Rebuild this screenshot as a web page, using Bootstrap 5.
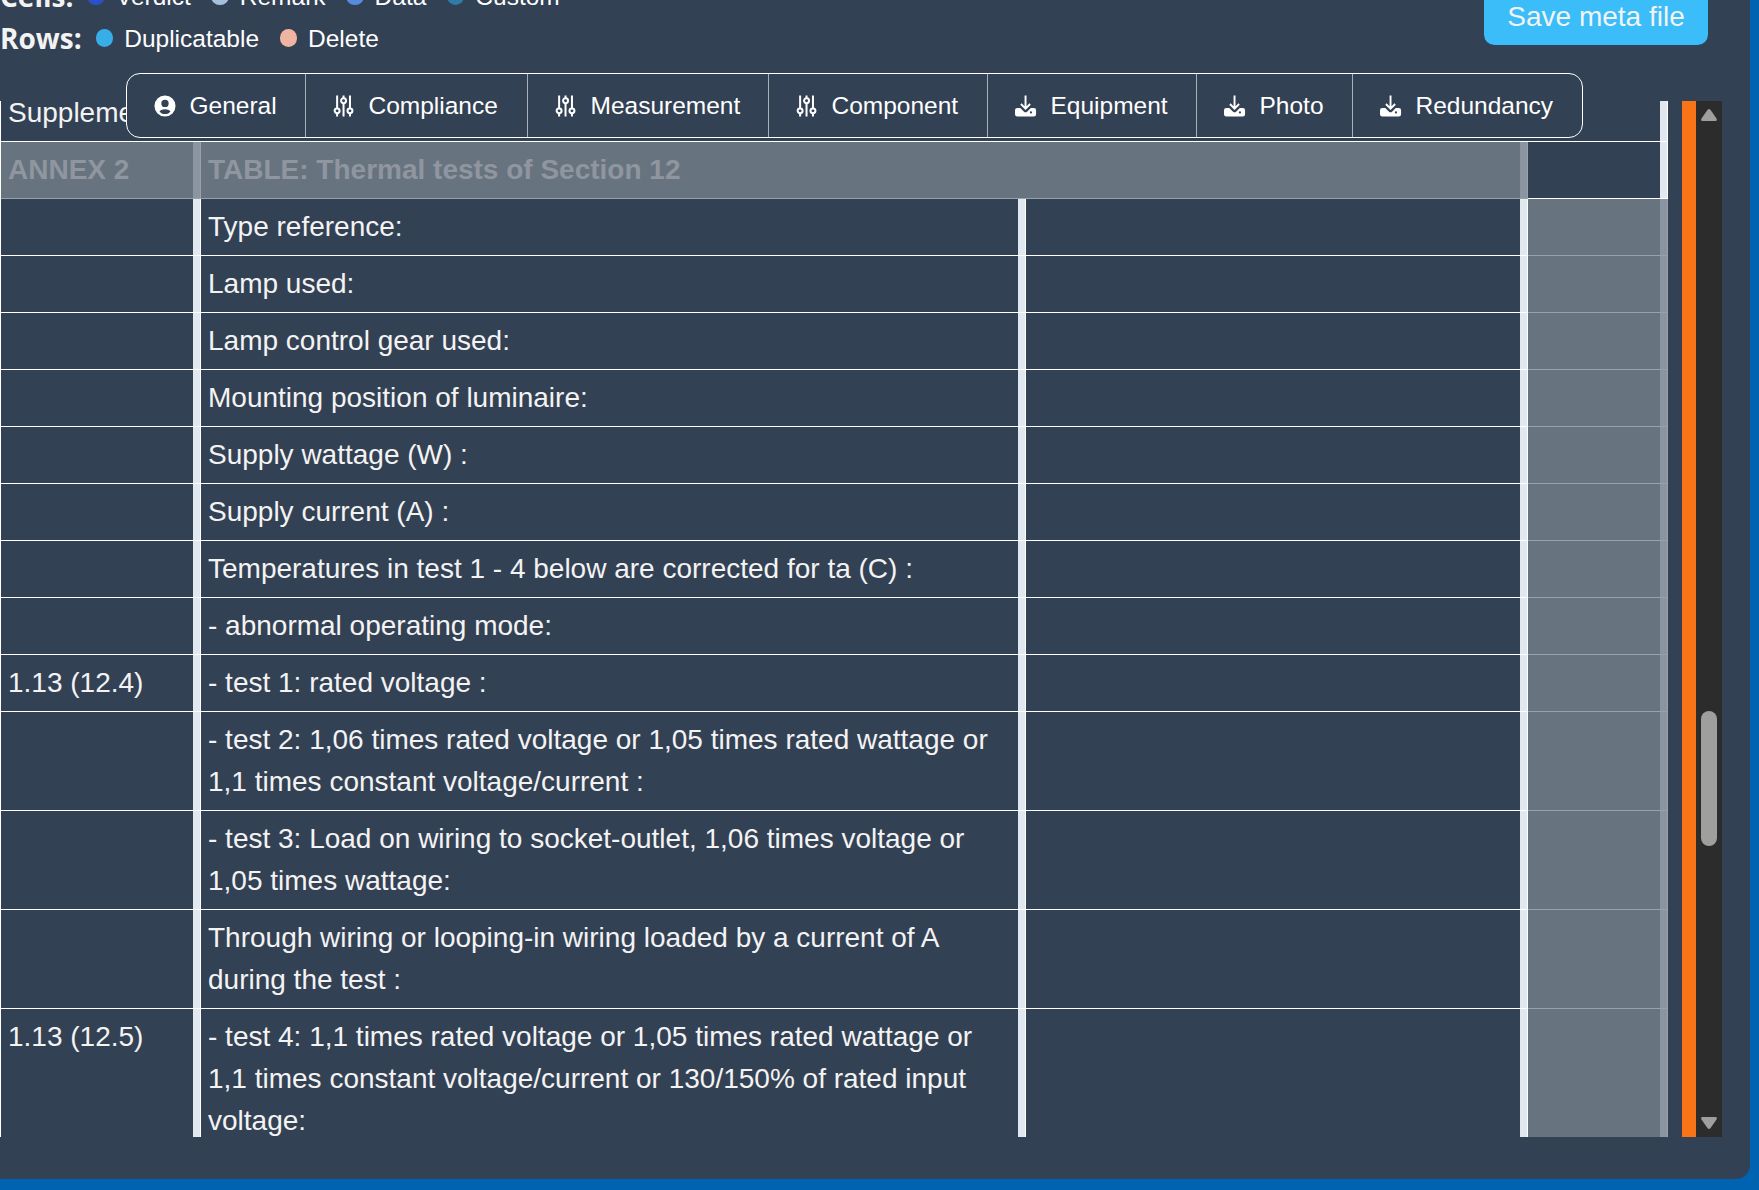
<!DOCTYPE html>
<html lang="en">
<head>
<meta charset="utf-8">
<title>Meta file editor</title>
<link href="https://cdn.jsdelivr.net/npm/bootstrap@5.3.0/dist/css/bootstrap.min.css" rel="stylesheet">
<style>
html,body{height:100%;overflow:hidden}
body{background:#0063b1;font-family:"Liberation Sans",Arial,sans-serif;font-size:28px;line-height:42px;color:#f3f3f3}
.panel{width:1750px;height:1179px;background:#334154;border-bottom-right-radius:14px}
.topbar{height:101px;padding-right:42px}
.legend{margin-top:-25px}
.legend-row{height:42px;font-size:24.5px;color:#fff}
.legend-row b{font-family:"Open Sans","Noto Sans",sans-serif;font-size:28px;color:#f3f3f3;margin-right:14px}
.dot{width:17.5px;height:17.5px;border-radius:50%;margin-right:11px;flex:none}
.legend-item{margin-right:20.500px;padding-top:1px}
.btn-save{width:224px;height:56px;margin-top:-11px;border-radius:10.5px;background:#3abdf8;color:#f3f3f3;font-size:28px;line-height:42px;border:0;padding:7px 0}
.btn-save:hover{background:#3abdf8;color:#fff}
.toolgroup{left:126px;top:73px;width:1457px;height:65px;border:1px solid #fff;border-radius:14px;background:#334154;overflow:hidden;z-index:3}
.tool{font-size:24.5px;line-height:35px;color:#fff;border:0;border-right:1px solid #a9b0b9;border-radius:0;padding:0 0 0 27px;display:flex;align-items:center;flex:none}
.tool:last-child{border-right:0}
.tool svg{width:22px;height:22px;margin-right:13.500px;flex:none}
.viewport{height:1036px;overflow:hidden}
.sheet{width:1668px;border-left:1px solid #fff}
.trow{display:grid;grid-template-columns:200px 825px 502px 140px;border-bottom:1px solid #fff}
.cellx{padding:7px;padding-right:20px;min-height:56px;border-right:1px solid #fff;box-shadow:inset -7px 0 #e1e8f0}
.cut{display:block;width:119px;overflow:hidden;white-space:nowrap}
.off{background:#687380;border-right-color:#9aa1ab;box-shadow:inset -7px 0 #8b95a1,0 1px #9aa1ab;color:#8f969f;position:relative}
.span2{grid-column:span 2}
.span4{grid-column:span 4}
.orange{width:14px;background:#f97416;margin-left:14px}
.sbar{width:26px;background:#2c2c2c;padding:8px 5px}
.sbar svg{width:16px;height:12px;display:block}
.thumb{height:135px;border-radius:8px;background:#9f9f9d;margin-top:590px}
</style>
<script src="https://cdn.jsdelivr.net/npm/bootstrap@5.3.0/dist/js/bootstrap.bundle.min.js"></script>
</head>
<body>
<svg class="d-none">
  <symbol id="i-user" viewBox="0 0 24 24"><path fill="currentColor" fill-rule="evenodd" d="M12 .5a11.500 11.500 0 1 0 0 23 11.500 11.500 0 0 0 0-23Zm0 4.700a4 4 0 1 1 0 8 4 4 0 0 1 0-8Zm0 15.500c-2.600 0-4.700-1-6-2.800 1.200-1.500 3.500-2.400 6-2.400s4.800.9 6 2.400c-1.300 1.800-3.400 2.800-6 2.800Z"/></symbol>
  <symbol id="i-sliders" viewBox="0 0 24 24"><g fill="none" stroke="currentColor" stroke-width="2.200"><path d="M4.500.5v14M4.500 20v3.500M11.500.5v3M11.500 9v14.500M18.500.5v14M18.500 20v3.500"/><circle cx="4.500" cy="17.300" r="2.700"/><circle cx="11.500" cy="6.200" r="2.700"/><circle cx="18.500" cy="17.300" r="2.700"/></g></symbol>
  <symbol id="i-download" viewBox="0 0 24 24"><path fill="none" stroke="currentColor" stroke-width="2.100" d="M11.500.5v14M6.500 9.800l5 5 5-5"/><path fill="currentColor" fill-rule="evenodd" d="M2.500 14.200h3.300l3.800 3.700a2.700 2.700 0 0 0 3.800 0l3.800-3.700h3.300a2.500 2.500 0 0 1 2.500 2.500v4.300a2.500 2.500 0 0 1-2.500 2.500h-18A2.500 2.500 0 0 1 0 21v-4.300a2.500 2.500 0 0 1 2.500-2.500Zm14.900 3.600a1.200 1.200 0 1 0 0 2.400 1.200 1.200 0 0 0 0-2.400Z"/></symbol>
</svg>
<main class="panel position-relative overflow-hidden">
  <header class="topbar d-flex justify-content-between align-items-start">
    <div class="legend">
      <div class="legend-row d-flex align-items-center"><b>Cells:</b>
        <i class="dot" style="background:#2b50c8"></i><span class="legend-item">Verdict</span>
        <i class="dot" style="background:#a5c0de"></i><span class="legend-item">Remark</span>
        <i class="dot" style="background:#568bde"></i><span class="legend-item">Data</span>
        <i class="dot" style="background:#2f7ca8"></i><span class="legend-item">Custom</span></div>
      <div class="legend-row d-flex align-items-center"><b>Rows:</b>
        <i class="dot" style="background:#38aee9"></i><span class="legend-item">Duplicatable</span>
        <i class="dot" style="background:#f0b5a2"></i><span class="legend-item">Delete</span></div>
    </div>
    <button class="btn btn-save">Save meta file</button>
  </header>
  <nav class="toolgroup position-absolute d-flex" role="group">
    <button class="btn tool" style="width:179px"><svg><use href="#i-user"/></svg>General</button>
    <button class="btn tool" style="width:222px"><svg><use href="#i-sliders"/></svg>Compliance</button>
    <button class="btn tool" style="width:241px"><svg><use href="#i-sliders"/></svg>Measurement</button>
    <button class="btn tool" style="width:219px"><svg><use href="#i-sliders"/></svg>Component</button>
    <button class="btn tool" style="width:209px"><svg><use href="#i-download"/></svg>Equipment</button>
    <button class="btn tool" style="width:156px"><svg><use href="#i-download"/></svg>Photo</button>
    <button class="btn tool" style="width:229px"><svg><use href="#i-download"/></svg>Redundancy</button>
  </nav>
  <div class="viewport d-flex">
    <div class="sheet" style="margin-top:-16px">
      <div class="trow"><div class="cellx span4"><span class="cut">Suppleme</span></div></div>
      <div class="trow fw-bold"><div class="cellx off">ANNEX 2</div><div class="cellx off span2">TABLE: Thermal tests of Section 12</div><div class="cellx"></div></div>
      <div class="trow"><div class="cellx"></div><div class="cellx">Type reference:</div><div class="cellx"></div><div class="cellx off"></div></div>
      <div class="trow"><div class="cellx"></div><div class="cellx">Lamp used:</div><div class="cellx"></div><div class="cellx off"></div></div>
      <div class="trow"><div class="cellx"></div><div class="cellx">Lamp control gear used:</div><div class="cellx"></div><div class="cellx off"></div></div>
      <div class="trow"><div class="cellx"></div><div class="cellx">Mounting position of luminaire:</div><div class="cellx"></div><div class="cellx off"></div></div>
      <div class="trow"><div class="cellx"></div><div class="cellx">Supply wattage (W) :</div><div class="cellx"></div><div class="cellx off"></div></div>
      <div class="trow"><div class="cellx"></div><div class="cellx">Supply current (A) :</div><div class="cellx"></div><div class="cellx off"></div></div>
      <div class="trow"><div class="cellx"></div><div class="cellx">Temperatures in test 1 - 4 below are corrected for ta (C) :</div><div class="cellx"></div><div class="cellx off"></div></div>
      <div class="trow"><div class="cellx"></div><div class="cellx">- abnormal operating mode:</div><div class="cellx"></div><div class="cellx off"></div></div>
      <div class="trow"><div class="cellx">1.13 (12.4)</div><div class="cellx">- test 1: rated voltage :</div><div class="cellx"></div><div class="cellx off"></div></div>
      <div class="trow"><div class="cellx"></div><div class="cellx">- test 2: 1,06 times rated voltage or 1,05 times rated wattage or 1,1 times constant voltage/current :</div><div class="cellx"></div><div class="cellx off"></div></div>
      <div class="trow"><div class="cellx"></div><div class="cellx">- test 3: Load on wiring to socket-outlet, 1,06 times voltage or 1,05 times wattage:</div><div class="cellx"></div><div class="cellx off"></div></div>
      <div class="trow"><div class="cellx"></div><div class="cellx">Through wiring or looping-in wiring loaded by a current of A during the test :</div><div class="cellx"></div><div class="cellx off"></div></div>
      <div class="trow"><div class="cellx">1.13 (12.5)</div><div class="cellx">- test 4: 1,1 times rated voltage or 1,05 times rated wattage or 1,1 times constant voltage/current or 130/150% of rated input voltage:</div><div class="cellx"></div><div class="cellx off"></div></div>
    </div>
    <div class="orange"></div>
    <div class="sbar d-flex flex-column">
      <svg viewBox="0 0 16 12"><path fill="#9f9f9d" d="M6.600.8Q8-.8 9.400.8L15.500 9.500Q16.500 12 14.500 12h-13Q-.5 12 .5 9.500Z"/></svg>
      <div class="thumb"></div>
      <svg class="mt-auto" viewBox="0 0 16 12"><path fill="#9f9f9d" d="M6.600 11.200Q8 12.800 9.400 11.200L15.500 2.500Q16.500 0 14.500 0h-13Q-.5 0 .5 2.500Z"/></svg>
    </div>
  </div>
</main>
</body>
</html>
